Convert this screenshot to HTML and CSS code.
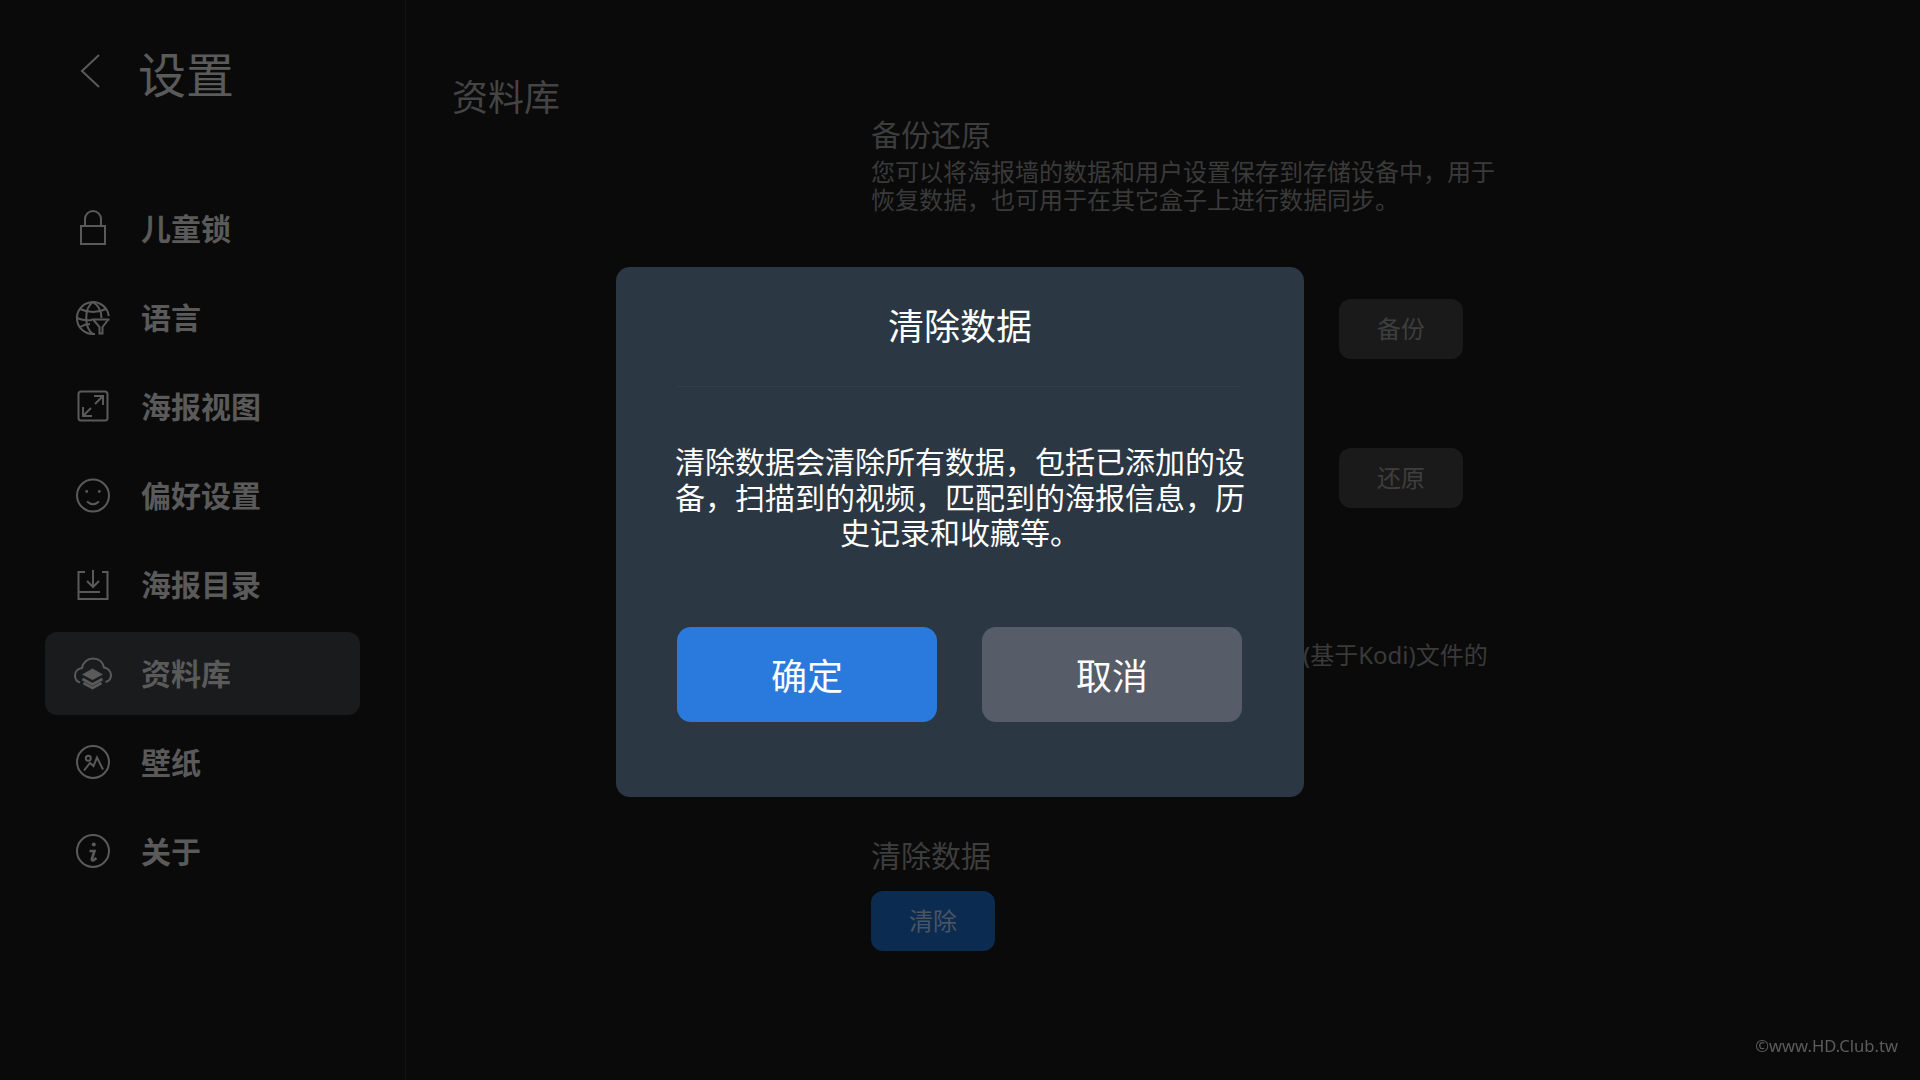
FILE: index.html
```html
<!DOCTYPE html>
<html lang="zh-CN">
<head>
<meta charset="utf-8">
<title>设置</title>
<link rel="stylesheet" href="styles.css">
</head>
<body>
<div class="app">
  <aside class="sidebar">
    <header class="side-head">
      <svg class="icon" viewBox="0 0 40 40"><path d="M26 3 L9 19 L26 35"/></svg>
      <h1 class="side-title">设置</h1>
    </header>
    <nav class="nav">
      <a class="nav-item"><svg class="icon" viewBox="0 0 40 40"><rect x="8" y="17" width="24" height="18"/><path d="M12 17 V10 a8 8 0 0 1 16 0 V17"/></svg><span>儿童锁</span></a>
      <a class="nav-item"><svg class="icon" viewBox="0 0 40 40"><path d="M35.8 18 A16 16 0 1 0 22 35.9"/><path d="M20 4 C11 10 11 30 20 36"/><path d="M20 4 C26 8 28.5 14 28.5 20"/><path d="M7 11 Q20 17 33 11"/><path d="M4 20 Q11 23 19 22"/><path d="M7 29 Q12 26 17 26"/><path d="M18.5 21.5 H36.5"/><path d="M20.5 22 L26.5 29 V35.5 H29.5 V29 L35 22"/></svg><span>语言</span></a>
      <a class="nav-item"><svg class="icon" viewBox="0 0 40 40"><rect x="5.5" y="4.5" width="29" height="29" rx="2.5"/><path d="M21 9 H30 V18 M30 9 L22 17"/><path d="M10 20 V29 H19 M10 29 L18 21"/></svg><span>海报视图</span></a>
      <a class="nav-item"><svg class="icon" viewBox="0 0 40 40"><circle cx="20" cy="19.5" r="16"/><circle class="solid" cx="13.7" cy="15.5" r="1.4"/><circle class="solid" cx="26.3" cy="15.5" r="1.4"/><path d="M14 25.5 Q20 31 26 25.5"/></svg><span>偏好设置</span></a>
      <a class="nav-item"><svg class="icon" viewBox="0 0 40 40"><path d="M12 7 H5.5 V34 H34.5 V7 H29"/><path d="M5.5 27 H27"/><path d="M20 5 V22 M14 16 L20 22 L26 16"/></svg><span>海报目录</span></a>
      <a class="nav-item active"><svg class="icon" viewBox="0 0 40 40"><path d="M7 28.5 C4 27.5 2 25 2 21.5 C2 17.5 5 14.5 9 14 C10 8 15 4.5 20 4.5 C26 4.5 30 8.5 31 13.5 C35 14 38 17.5 38 21 C38 25 35.5 27.5 32.5 28"/><path class="solid" d="M19.5 14.5 L30 20.5 L19.5 26 L9 20.5 Z"/><path class="thick" d="M9.5 25 L19.5 30.5 L29.5 25"/><path class="thick" d="M10.5 29 L19.5 34 L28.5 29"/></svg><span>资料库</span></a>
      <a class="nav-item"><svg class="icon" viewBox="0 0 40 40"><circle cx="20" cy="19" r="16"/><circle cx="15.3" cy="15.2" r="2.5"/><path d="M11 27.5 L17 20 L20.5 23 L24 14.5 L30 26.5"/></svg><span>壁纸</span></a>
      <a class="nav-item"><svg class="icon" viewBox="0 0 40 40"><circle cx="20" cy="19" r="16"/><circle class="solid" cx="20.8" cy="12.5" r="2"/><path class="thick" d="M16.5 19 H21.5 L18.8 27 Q18.5 29 20.5 28.3 L23.5 26"/></svg><span>关于</span></a>
    </nav>
  </aside>

  <main class="main">
    <h2 class="page-title">资料库</h2>
    <div class="settings">
      <section class="block backup">
        <h3 class="block-title">备份还原</h3>
        <p class="desc">您可以将海报墙的数据和用户设置保存到存储设备中，用于恢复数据，也可用于在其它盒子上进行数据同步。</p>
        <div class="row first"><button class="btn">备份</button></div>
        <div class="row"><button class="btn">还原</button></div>
      </section>
      <section class="block nfo">
        <p class="desc">(基于Kodi)文件的</p>
      </section>
      <section class="block clear">
        <h3 class="block-title">清除数据</h3>
        <button class="btn btn-blue">清除</button>
      </section>
    </div>
  </main>
</div>

<div class="overlay">
  <div class="dialog">
    <h2 class="dialog-title">清除数据</h2>
    <p class="dialog-text">清除数据会清除所有数据，包括已添加的设备，扫描到的视频，匹配到的海报信息，历史记录和收藏等。</p>
    <div class="dialog-actions">
      <button class="dialog-btn confirm">确定</button>
      <button class="dialog-btn cancel">取消</button>
    </div>
  </div>
</div>

<div class="watermark">©www.HD.Club.tw</div>
</body>
</html>
```
FILE: styles.css
```css
* { box-sizing: border-box; margin: 0; padding: 0; }

html, body {
  width: 1920px;
  height: 1080px;
  overflow: hidden;
  background: #0a0a0a;
  font-family: "Noto Sans CJK SC", "Noto Sans", sans-serif;
}

.app { display: flex; height: 1080px; }

.sidebar {
  flex: none;
  width: 406px;
  border-right: 1px solid #131313;
  padding-left: 45px;
}

.icon {
  flex: none;
  width: 40px;
  height: 40px;
  fill: none;
  stroke: #5a5a5a;
  stroke-width: 2;
}
.icon .solid { fill: #5a5a5a; stroke: none; }
.icon .thick { stroke-width: 2.6; }

.side-head {
  display: flex;
  align-items: center;
  gap: 25px;
  height: 187px;
  padding: 0 0 35px 28px;
}
.side-head .icon { margin-bottom: 8px; }
.side-title { font-size: 48px; font-weight: 400; color: #5a5a5a; line-height: 64px; margin-bottom: 8px; }

.nav { display: flex; flex-direction: column; gap: 6px; width: 315px; }
.nav-item {
  display: flex;
  align-items: center;
  gap: 28px;
  height: 83px;
  padding-left: 28px;
  border-radius: 12px;
  font-size: 30px;
  font-weight: 600;
  color: #5a5a5a;
}
.nav-item span { margin-bottom: 3px; }
.nav-item.active { background: #1a1b1d; }

.main {
  flex: 1;
  display: grid;
  grid-template-columns: 419px 640px;
  padding-left: 46px;
  align-items: start;
}

.page-title {
  font-size: 36px;
  font-weight: 400;
  line-height: 48px;
  color: #444;
  padding-top: 71px;
}

.settings { padding-top: 115px; }

.block-title {
  font-size: 30px;
  font-weight: 400;
  line-height: 36px;
  color: #3d3d3d;
}

.desc {
  margin-top: 7px;
  width: 625px;
  font-family: "Noto Sans", "Noto Sans CJK SC", sans-serif;
  font-size: 24px;
  line-height: 28px;
  color: #3a3a3a;
}

.row { display: flex; justify-content: flex-end; width: 592px; margin-top: 89px; }
.row.first { margin-top: 85px; }

.btn {
  width: 124px;
  height: 60px;
  padding-bottom: 3px;
  border: 0;
  border-radius: 12px;
  background: #1a1a1a;
  color: #3e3e3e;
  font: 400 24px/34px "Noto Sans CJK SC", "Noto Sans", sans-serif;
}
.btn-blue { background: #0c2b50; color: #4a5563; display: block; margin-top: 19px; }

.nfo { margin-top: 133px; }
.nfo .desc { margin-top: 0; padding-left: 432px; }
.clear { margin-top: 167px; }

.overlay {
  position: fixed;
  inset: 0;
  display: flex;
  align-items: center;
  justify-content: center;
  padding-bottom: 16px;
}

.dialog {
  width: 688px;
  height: 530px;
  padding: 0 62px 0 61px;
  border-radius: 14px;
  background: #2b3743;
  color: #fff;
  display: flex;
  flex-direction: column;
}

.dialog-title {
  height: 120px;
  margin-right: 2px;
  padding-left: 3px;
  font-size: 36px;
  font-weight: 400;
  line-height: 114px;
  text-align: center;
  border-bottom: 1px solid #343f4c;
}

.dialog-text {
  margin: 56px -3px 0 -2px;
  font-size: 30px;
  line-height: 35.5px;
  text-align: center;
}

.dialog-actions {
  display: flex;
  justify-content: space-between;
  margin-top: 77px;
}

.dialog-btn {
  width: 260px;
  height: 95px;
  padding-bottom: 1px;
  border: 0;
  border-radius: 14px;
  color: #fff;
  font: 400 36px/48px "Noto Sans CJK SC", "Noto Sans", sans-serif;
}
.confirm { background: #2a7ade; }
.cancel { background: #565d68; }

.watermark {
  position: fixed;
  right: 22px;
  bottom: 22px;
  font-family: "Noto Sans", sans-serif;
  font-size: 16.6px;
  line-height: 24px;
  color: #5c5c5c;
}
```
